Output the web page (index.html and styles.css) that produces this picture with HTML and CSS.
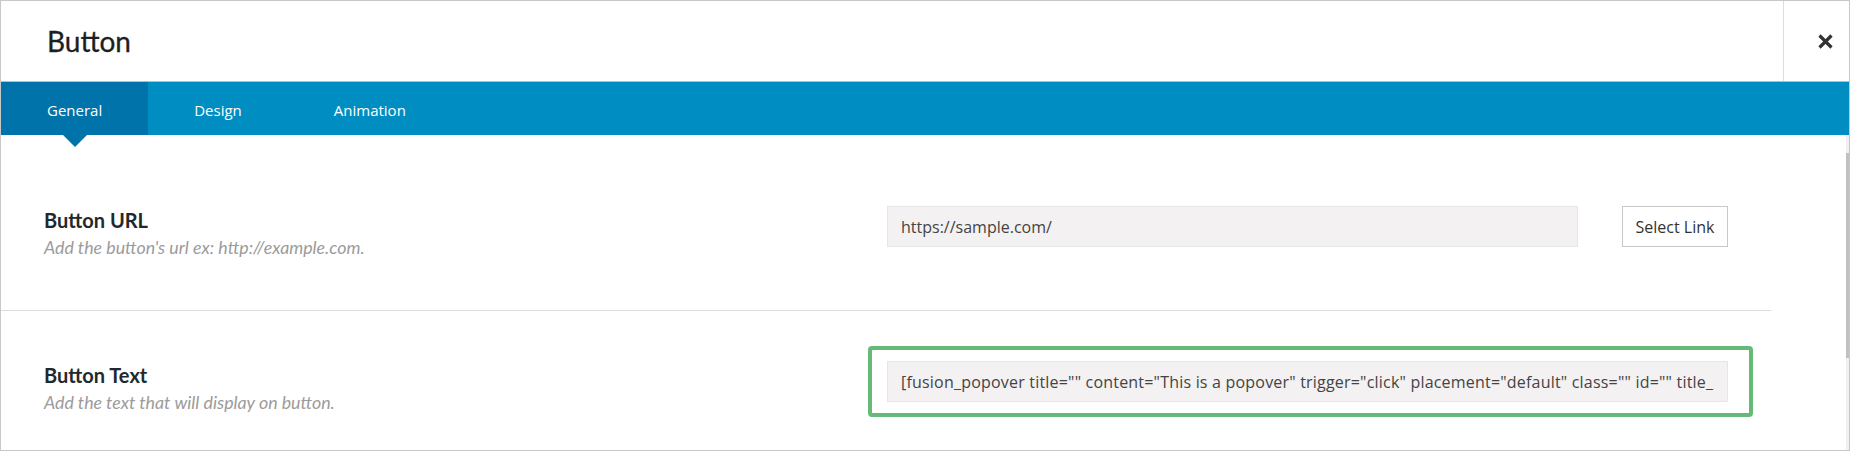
FILE: index.html
```html
<!DOCTYPE html>
<html lang="en">
<head>
    <meta charset="UTF-8">
    <meta name="viewport" content="width=device-width, initial-scale=1.0">
    <title>Button</title>
    <link rel="stylesheet" href="styles.css">
</head>
<body>

    <div class="modal">
        <div class="modal-header">
            <h2 class="modal-title">Button</h2>
            <div class="modal-close">
                <svg width="15" height="15" viewBox="0 0 15 15">
                    <path d="M1.5 1.5 L13.5 13.5 M13.5 1.5 L1.5 13.5" stroke="#333" stroke-width="3.2" fill="none"/>
                </svg>
            </div>
        </div>

        <ul class="tabs">
            <li class="tab active">General</li>
            <li class="tab">Design</li>
            <li class="tab">Animation</li>
        </ul>

        <div class="modal-body">
            <div class="options">
                <div class="option">
                    <div class="option-label">
                        <h3>Button URL</h3>
                        <p>Add the button's url ex: http://example.com.</p>
                    </div>
                    <div class="option-field">
                        <div class="link-field">
                            <input type="text" value="https://sample.com/" readonly>
                            <button>Select Link</button>
                        </div>
                    </div>
                </div>

                <div class="option">
                    <div class="option-label">
                        <h3>Button Text</h3>
                        <p>Add the text that will display on button.</p>
                    </div>
                    <div class="option-field">
                        <div class="highlight">
                            <input type="text" value='[fusion_popover title="" content="This is a popover" trigger="click" placement="default" class="" id="" title_bg_color="" content_bg_color="" bordercolor="" textcolor=""]Button[/fusion_popover]' readonly>
                        </div>
                    </div>
                </div>
            </div>
            <div class="scrollbar"><div class="scrollbar-thumb"></div></div>
        </div>
    </div>

</body>
</html>
```

FILE: styles.css
```css
/* Modal de l'élément Button */
body {
    margin: 0;
    font-family: "Open Sans", Arial, sans-serif;
    background: #fff;
}

.modal {
    width: 1850px;
    height: 451px;
    box-sizing: border-box;
    border: 1px solid #c8c8c8;
    display: flex;
    flex-direction: column;
    overflow: hidden;
}

/* En-tête */
.modal-header {
    display: flex;
    height: 80px;
    flex-shrink: 0;
}

.modal-title {
    flex: 1;
    margin: 0;
    padding-left: 46px;
    font-family: Lato, sans-serif;
    font-size: 28px;
    font-weight: normal;
    line-height: 80px;
    color: #1e1e1e;
    -webkit-text-stroke: 0.3px #1e1e1e;
}

.modal-close {
    width: 66px;
    border-left: 1px solid #dddddd;
    display: flex;
    align-items: center;
    padding-left: 34px;
    box-sizing: border-box;
    cursor: pointer;
}

.modal-close svg {
    display: block;
}

/* Onglets */
.tabs {
    display: flex;
    margin: 0;
    padding: 0;
    list-style: none;
    height: 54px;
    box-sizing: border-box;
    flex-shrink: 0;
    border-top: 1px solid #8fcbe3;
    background: #008ec2;
}

.tab {
    position: relative;
    padding: 3px 46px 0;
    line-height: 50px;
    font-size: 15px;
    color: #fff;
    cursor: pointer;
}

.tab.active {
    background: #0073aa;
}

.tab.active::after {
    content: "";
    position: absolute;
    left: 50%;
    bottom: -12px;
    margin-left: -12px;
    border-left: 12px solid transparent;
    border-right: 12px solid transparent;
    border-top: 12px solid #0073aa;
}

/* Contenu */
.modal-body {
    flex: 1;
    display: flex;
    min-height: 0;
}

.options {
    flex: 1;
    padding-right: 75px;
}

.option {
    display: grid;
    grid-template-columns: 843px 1fr;
    padding: 71px 43px 52px;
    border-bottom: 1px solid #dddddd;
}

.option + .option {
    padding-top: 50px;
    border-bottom: none;
}

.option-label h3 {
    margin: 2px 0 0;
    font-family: Lato, sans-serif;
    font-size: 20px;
    font-weight: bold;
    line-height: 24px;
    color: #23282d;
}

.option-label p {
    margin: 5px 0 0;
    font-family: Lato, sans-serif;
    font-style: italic;
    font-size: 17.8px;
    line-height: 21px;
    color: #9b9b9b;
}

.option-field input {
    height: 41px;
    box-sizing: border-box;
    min-width: 0;
    padding: 0 13px;
    border: 1px solid #e6e6e6;
    background: #f3f1f2;
    font-family: "Open Sans", sans-serif;
    font-size: 16px;
    color: #444;
    outline: none;
}

.link-field {
    display: flex;
    gap: 44px;
}

.link-field input {
    flex: 1;
}

.link-field button {
    width: 106px;
    height: 41px;
    padding: 0;
    border: 1px solid #c8c8c8;
    background: #fff;
    font-family: "Open Sans", sans-serif;
    font-size: 16px;
    color: #333;
    cursor: pointer;
}

.highlight {
    margin: -15px -25px -15px -19px;
    padding: 11px 21px 11px 15px;
    border: 4px solid #66ba78;
    border-radius: 4px;
}

.highlight input {
    display: block;
    width: 100%;
    letter-spacing: 0.2px;
}

/* Barre de défilement */
.scrollbar {
    width: 3px;
    background: #f0f0f0;
}

.scrollbar-thumb {
    margin-top: 18px;
    height: 205px;
    background: #c1c1c1;
}
```
